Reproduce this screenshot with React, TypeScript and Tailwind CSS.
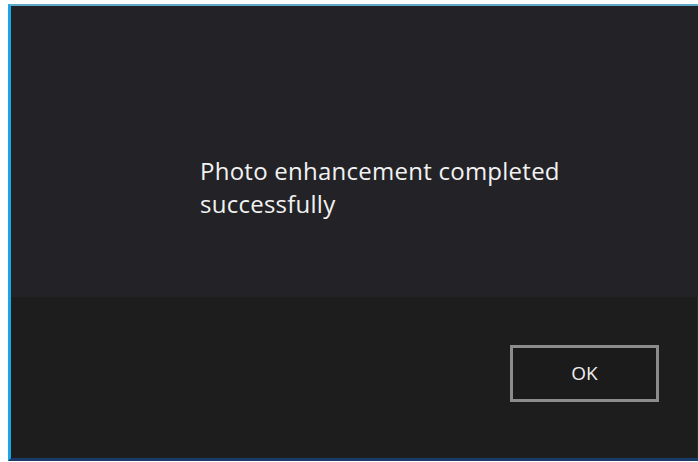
import React from 'react';

const App: React.FC = () => {
  return (
    <div className="w-[698px] h-[462px] bg-white pt-[4px] pl-[8px] pb-[1px]" style={{ fontFamily: '"Open Sans", "Noto Sans", sans-serif' }}>
      <div className="h-full flex flex-col border-l-[3px] border-l-[#1ca6e8] border-t-2 border-t-[#5fa9c9] border-b-[3px] border-b-[#1a3a6a] bg-[#1d1d1d]">
        <div className="h-[291px] bg-[#232327] pl-[189px] pt-[148px]">
          <p className="text-[24px] leading-[33px] tracking-[0.25px] text-[#f2f2f2] w-[420px]">
            Photo enhancement completed
            <br />
            successfully
          </p>
        </div>
        <div className="flex-1 flex justify-end items-start pt-[48px] pr-[38px] border-r border-r-[#2a2a30]">
          <button className="w-[149px] h-[57px] border-[3px] border-[#8c8c8c] bg-[#1b1b1b] text-[19px] text-[#eeeeee]">
            OK
          </button>
        </div>
      </div>
    </div>
  );
};

export default App;
